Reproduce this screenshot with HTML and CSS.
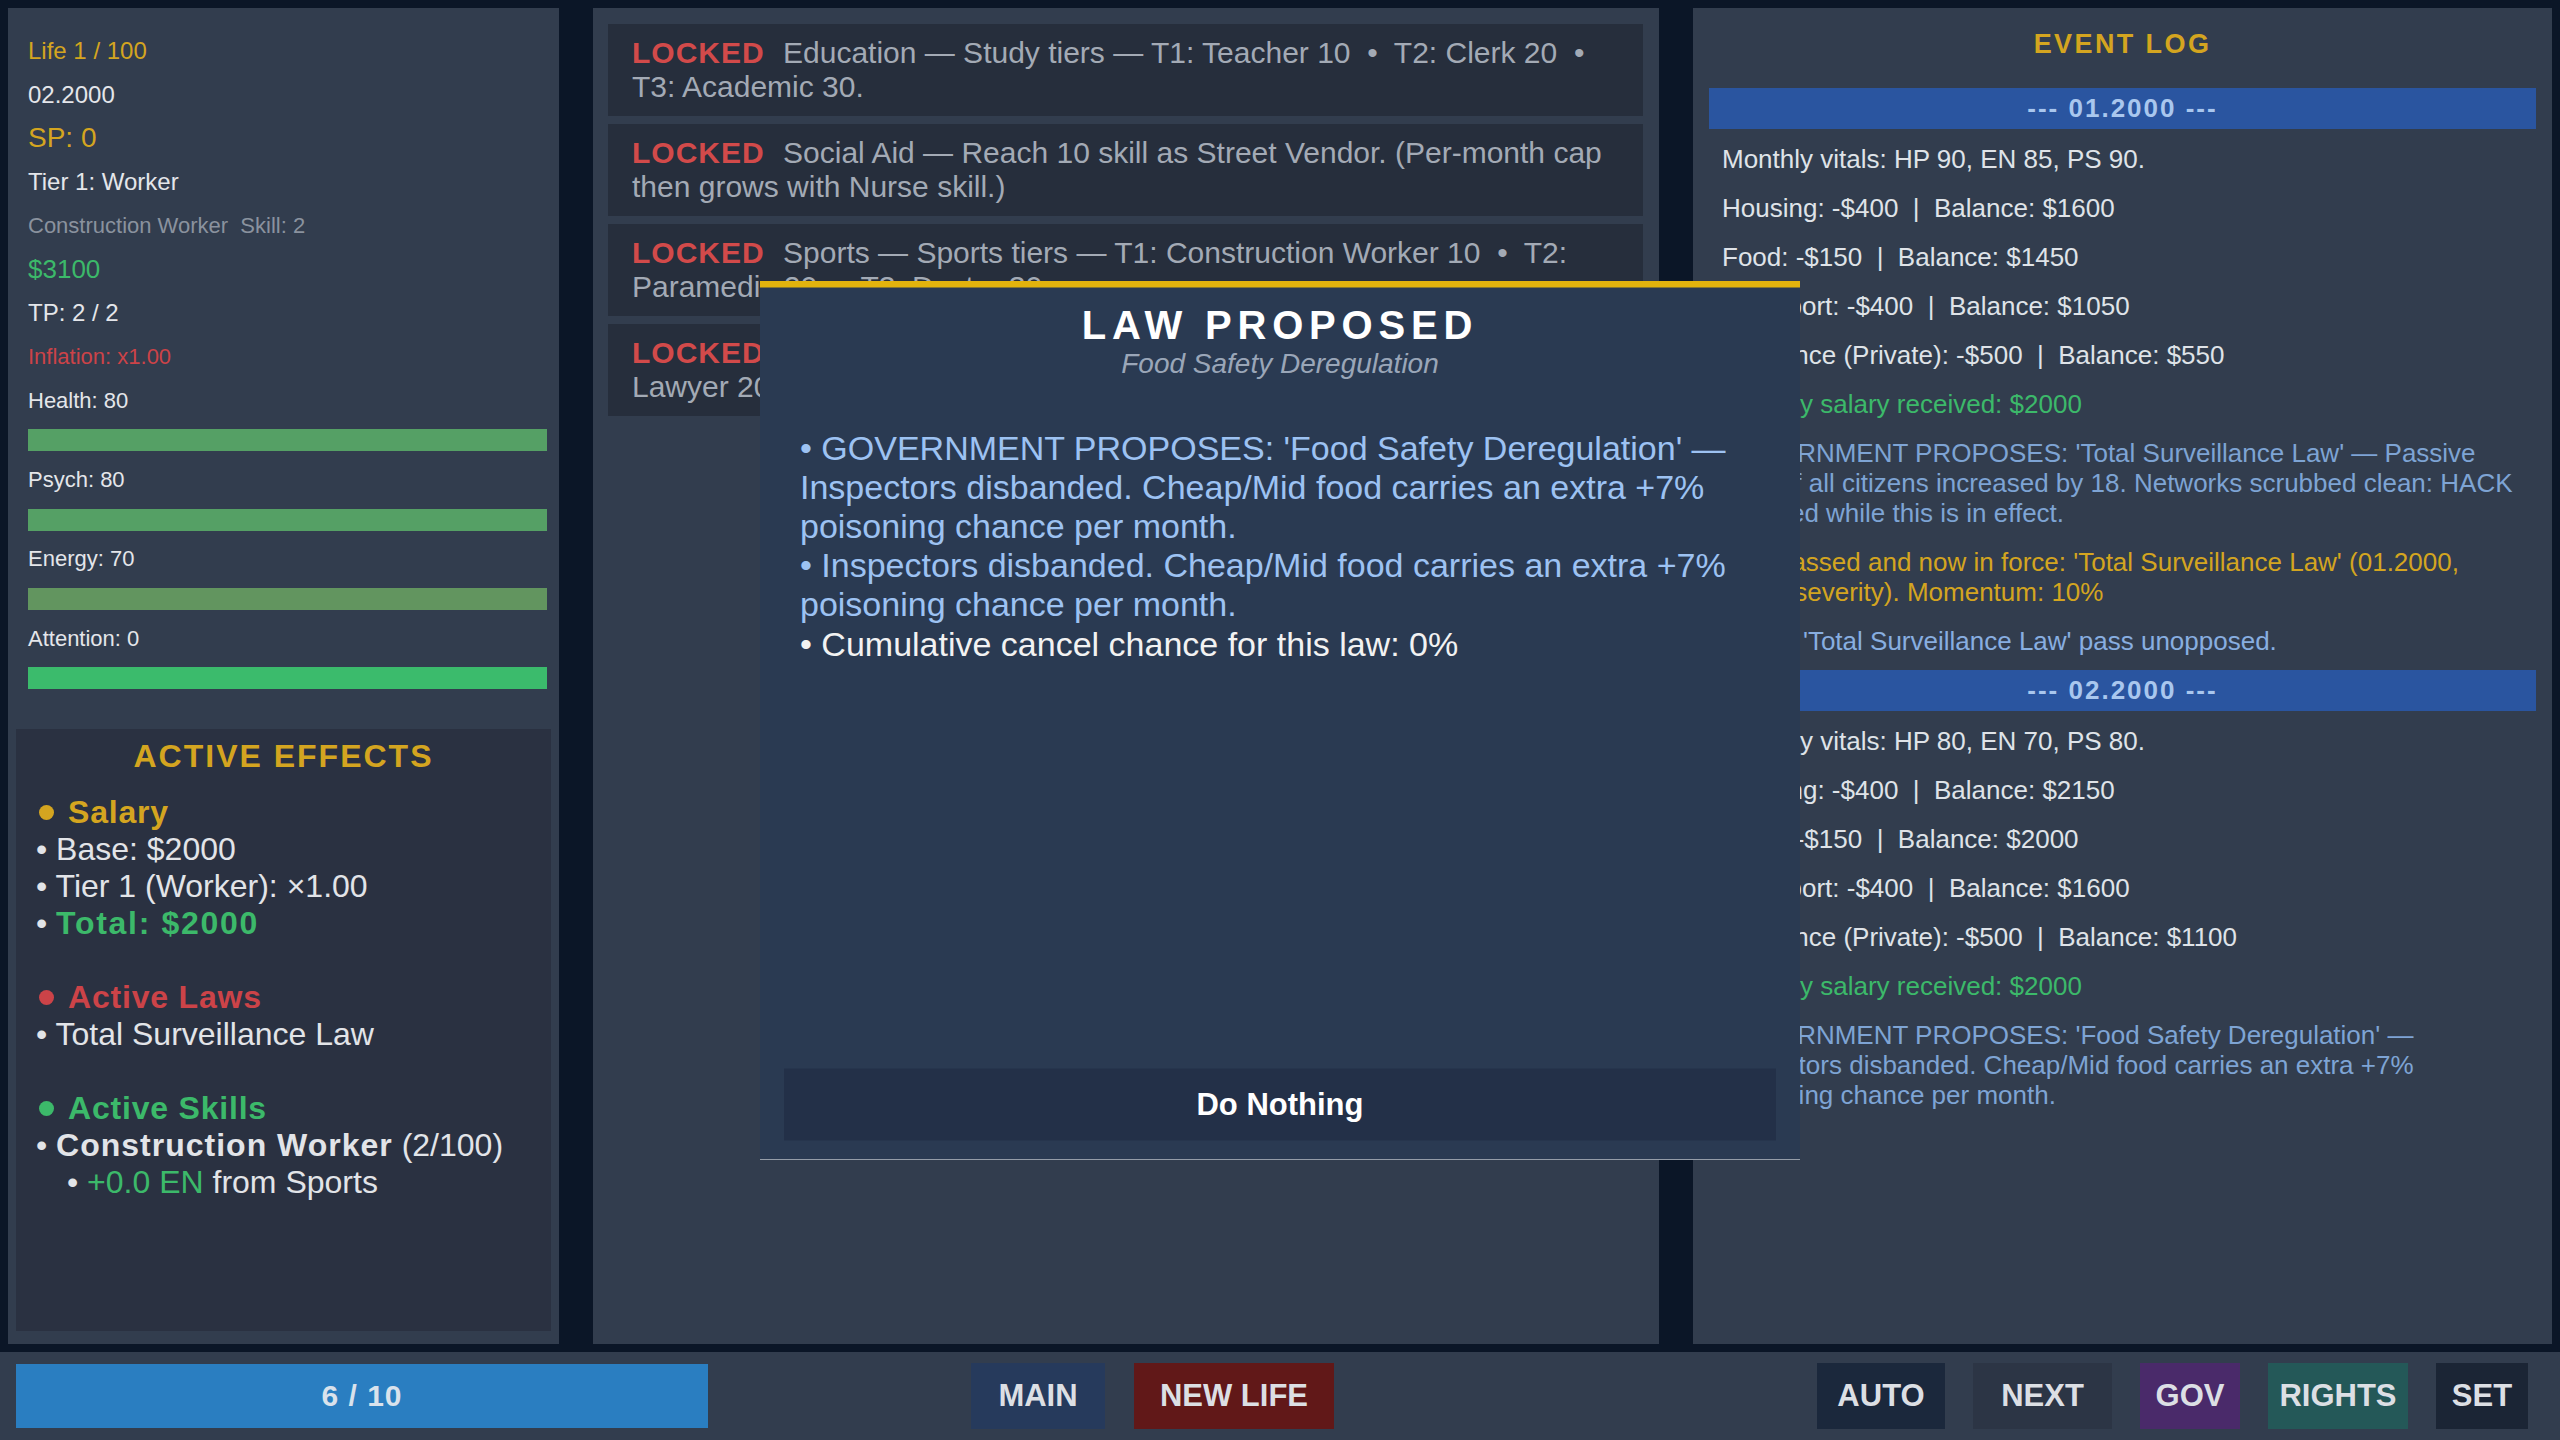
FILE: index.html
```html
<!DOCTYPE html>
<html lang="en">
<head>
    <meta charset="UTF-8">
    <meta name="viewport" content="width=device-width, initial-scale=1.0">
    <title>Life Sim</title>
    <link rel="stylesheet" href="styles.css">
</head>
<body>
    <div class="game">
        <!-- left: character stats -->
        <div class="panel stats-panel">
            <div class="stats">
                <div class="stat gold">Life 1 / 100</div>
                <div class="stat">02.2000</div>
                <div class="stat gold sp">SP: 0</div>
                <div class="stat">Tier 1: Worker</div>
                <div class="stat small muted">Construction Worker&nbsp; Skill: 2</div>
                <div class="stat green money">$3100</div>
                <div class="stat">TP: 2 / 2</div>
                <div class="stat small red">Inflation: x1.00</div>
                <div class="stat small">Health: 80</div>
                <div class="bar bar-health"></div>
                <div class="stat small">Psych: 80</div>
                <div class="bar bar-psych"></div>
                <div class="stat small">Energy: 70</div>
                <div class="bar bar-energy"></div>
                <div class="stat small">Attention: 0</div>
                <div class="bar bar-attention"></div>
            </div>

            <div class="effects">
                <div class="effects-title">ACTIVE EFFECTS</div>
                <div class="effects-list">
                    <div class="fx-head gold"><span class="dot dot-gold"></span>Salary</div>
                    <div>• Base: $2000</div>
                    <div>• Tier 1 (Worker): ×1.00</div>
                    <div>• <b class="green fx-total">Total: $2000</b></div>
                    <div class="fx-blank"></div>
                    <div class="fx-head red"><span class="dot dot-red"></span>Active Laws</div>
                    <div>• Total Surveillance Law</div>
                    <div class="fx-blank"></div>
                    <div class="fx-head green"><span class="dot dot-green"></span>Active Skills</div>
                    <div>• <b>Construction Worker</b> (2/100)</div>
                    <div class="fx-sub">• <span class="green">+0.0 EN</span> from Sports</div>
                </div>
            </div>
        </div>

        <!-- center: career tracks -->
        <div class="panel jobs-panel">
            <div class="job"><span class="locked">LOCKED</span> <span>Education — Study tiers — T1: Teacher 10&nbsp; •&nbsp; T2: Clerk 20&nbsp; •&nbsp; T3: Academic 30.</span></div>
            <div class="job"><span class="locked">LOCKED</span> <span>Social Aid — Reach 10 skill as Street Vendor. (Per-month cap then grows with Nurse skill.)</span></div>
            <div class="job"><span class="locked">LOCKED</span> <span>Sports — Sports tiers — T1: Construction Worker 10&nbsp; •&nbsp; T2: Paramedic 20&nbsp; •&nbsp; T3: Doctor 30.</span></div>
            <div class="job"><span class="locked">LOCKED</span> <span>Justice — Legal tiers — T1: Police Investigator 10&nbsp; •&nbsp; T2: Lawyer 20&nbsp; •&nbsp; T3: Judge 30.</span></div>
        </div>

        <!-- right: event log -->
        <div class="panel log-panel">
            <div class="log-title">EVENT LOG</div>
            <div class="log">
                <div class="log-date">--- 01.2000 ---</div>
                <div class="log-entry">Monthly vitals: HP 90, EN 85, PS 90.</div>
                <div class="log-entry">Housing: -$400 &nbsp;|&nbsp; Balance: $1600</div>
                <div class="log-entry">Food: -$150 &nbsp;|&nbsp; Balance: $1450</div>
                <div class="log-entry">Transport: -$400 &nbsp;|&nbsp; Balance: $1050</div>
                <div class="log-entry">Insurance (Private): -$500 &nbsp;|&nbsp; Balance: $550</div>
                <div class="log-entry green">Monthly salary received: $2000</div>
                <div class="log-entry gov">GOVERNMENT PROPOSES: 'Total Surveillance Law' — Passive heat of all citizens increased by 18. Networks scrubbed clean: HACK disabled while this is in effect.</div>
                <div class="log-entry gold">Law passed and now in force: 'Total Surveillance Law' (01.2000, major severity). Momentum: 10%</div>
                <div class="log-entry info">Event: 'Total Surveillance Law' pass unopposed.</div>
                <div class="log-date">--- 02.2000 ---</div>
                <div class="log-entry">Monthly vitals: HP 80, EN 70, PS 80.</div>
                <div class="log-entry">Housing: -$400 &nbsp;|&nbsp; Balance: $2150</div>
                <div class="log-entry">Food: -$150 &nbsp;|&nbsp; Balance: $2000</div>
                <div class="log-entry">Transport: -$400 &nbsp;|&nbsp; Balance: $1600</div>
                <div class="log-entry">Insurance (Private): -$500 &nbsp;|&nbsp; Balance: $1100</div>
                <div class="log-entry green">Monthly salary received: $2000</div>
                <div class="log-entry gov">GOVERNMENT PROPOSES: 'Food Safety Deregulation' — Inspectors disbanded. Cheap/Mid food carries an extra +7% poisoning chance per month.</div>
            </div>
        </div>
    </div>

    <div class="bottom-bar">
        <div class="progress">6 / 10</div>
        <div class="nav nav-center">
            <div class="btn btn-main">MAIN</div>
            <div class="btn btn-newlife">NEW LIFE</div>
        </div>
        <div class="nav nav-right">
            <div class="btn btn-auto">AUTO</div>
            <div class="btn btn-next">NEXT</div>
            <div class="btn btn-gov">GOV</div>
            <div class="btn btn-rights">RIGHTS</div>
            <div class="btn btn-set">SET</div>
        </div>
    </div>

    <!-- law proposal popup -->
    <div class="modal">
        <div class="modal-title">LAW PROPOSED</div>
        <div class="modal-sub">Food Safety Deregulation</div>
        <div class="modal-body">
            <div>• GOVERNMENT PROPOSES: 'Food Safety Deregulation' — Inspectors disbanded. Cheap/Mid food carries an extra +7% poisoning chance per month.</div>
            <div>• Inspectors disbanded. Cheap/Mid food carries an extra +7% poisoning chance per month.</div>
            <div class="modal-note">• Cumulative cancel chance for this law: 0%</div>
        </div>
        <div class="modal-btn">Do Nothing</div>
    </div>
</body>
</html>
```

FILE: styles.css
```css
* {
    box-sizing: border-box;
}

body {
    margin: 0;
    width: 2560px;
    height: 1440px;
    overflow: hidden;
    background: #0b1627;
    font-family: "Liberation Sans", Arial, sans-serif;
    color: #e4e6ea;
    display: flex;
    flex-direction: column;
}

.gold { color: #d4a520; }
.green { color: #3cb96a; }
.red { color: #cc4348; }
.muted { color: #8a929e; }

.game {
    display: grid;
    grid-template-columns: 551px 1066px 1fr;
    gap: 34px;
    padding: 8px 8px 0 8px;
    height: 1344px;
}

.panel {
    background: #323d4e;
}

/* left panel */
.stats-panel {
    display: flex;
    flex-direction: column;
    padding: 0 8px 13px;
}

.stats {
    display: flex;
    flex-direction: column;
    gap: 13.7px;
    padding: 28px 4px 0 12px;
}

.stat {
    font-size: 24px;
    line-height: 30px;
    white-space: nowrap;
}

.stat.small { font-size: 22px; }
.stat.sp { font-size: 28px; }
.stat.money { font-size: 26px; }

.bar {
    height: 22px;
}

.bar-health { background: #55a065; }
.bar-psych { background: #55a065; }
.bar-energy { background: #62955f; }
.bar-attention { background: #3bbb6c; }

.effects {
    margin-top: 40px;
    flex: 1;
    background: #2a3141;
    padding-top: 9px;
}

.effects-title {
    text-align: center;
    font-size: 32px;
    font-weight: bold;
    letter-spacing: 2px;
    line-height: 37px;
    color: #d4a520;
}

.effects-list {
    margin-top: 19px;
    padding-left: 20px;
    font-size: 32px;
    line-height: 37px;
    color: #e2e4e8;
}

.effects-list b {
    letter-spacing: 1px;
}

.effects-list .fx-total {
    letter-spacing: 1.7px;
}

.fx-head {
    display: flex;
    align-items: center;
    font-weight: bold;
    letter-spacing: 0.8px;
}

.dot {
    width: 15px;
    height: 15px;
    border-radius: 50%;
    margin: 0 14px 0 3px;
}

.dot-gold { background: #d4a520; }
.dot-red { background: #cc4348; }
.dot-green { background: #3cb96a; }

.fx-blank { height: 37px; }
.fx-sub { padding-left: 31px; }

/* center panel */
.jobs-panel {
    display: flex;
    flex-direction: column;
    gap: 8px;
    padding: 16px 16px 16px 15px;
}

.job {
    background: #262e3c;
    padding: 11.5px 24px;
    font-size: 30px;
    line-height: 34.5px;
    color: #a3aab5;
}

.locked {
    color: #d24a4a;
    font-weight: bold;
    letter-spacing: 1px;
    margin-right: 10px;
}

/* right panel */
.log-panel {
    padding: 21px 16px 16px;
}

.log-title {
    text-align: center;
    font-size: 27px;
    font-weight: bold;
    letter-spacing: 2.4px;
    line-height: 30px;
    color: #d4a520;
    margin-bottom: 29px;
}

.log {
    display: flex;
    flex-direction: column;
    gap: 10px;
}

.log-date {
    background: #2a55a0;
    color: #a9c7ee;
    text-align: center;
    font-size: 26px;
    font-weight: bold;
    letter-spacing: 2px;
    line-height: 41px;
}

.log-entry {
    padding: 4.5px 13px;
    font-size: 26px;
    line-height: 30px;
    color: #dfe3e8;
}

.log-entry.green { color: #3cb96a; }
.log-entry.gold { color: #d4a520; }
.log-entry.gov { color: #7ea4d4; }
.log-entry.info { color: #88aee0; }

/* bottom bar */
.bottom-bar {
    height: 88px;
    margin-top: 8px;
    background: #323d4e;
    display: flex;
    align-items: center;
    padding: 0 32px 0 16px;
}

.progress {
    width: 692px;
    height: 64px;
    background: #2a7ec1;
    display: flex;
    align-items: center;
    justify-content: center;
    font-size: 30px;
    font-weight: bold;
    letter-spacing: 1px;
    color: #d9e2ec;
}

.nav {
    display: flex;
    gap: 28px;
}

.nav-center {
    margin-left: 263px;
    gap: 29px;
}

.nav-right {
    margin-left: auto;
}

.btn {
    height: 66px;
    display: flex;
    align-items: center;
    justify-content: center;
    font-size: 31px;
    font-weight: bold;
    color: #dcdfe4;
}

.btn-main { width: 134px; background: #263a5c; }
.btn-newlife { width: 200px; background: #611818; }
.btn-auto { width: 128px; background: #1b283c; }
.btn-next { width: 139px; background: #2c3545; }
.btn-gov { width: 100px; background: #4a2a6a; }
.btn-rights { width: 140px; background: #245858; }
.btn-set { width: 92px; background: #1b2535; }

/* popup */
.modal {
    position: fixed;
    left: 50%;
    top: 50%;
    transform: translate(-50%, -50%);
    width: 1040px;
    height: 879px;
    background: #2a3a52;
    border-top: 7px solid #e2b30d;
    padding: 14px 24px 19px;
    display: flex;
    flex-direction: column;
}

.modal-title {
    text-align: center;
    font-size: 40px;
    font-weight: bold;
    letter-spacing: 5.8px;
    line-height: 46px;
    color: #ffffff;
}

.modal-sub {
    text-align: center;
    font-style: italic;
    font-size: 28px;
    line-height: 32px;
    color: #9aa6b8;
}

.modal-body {
    flex: 1;
    margin-top: 48.5px;
    padding: 0 16px;
    font-size: 34px;
    line-height: 39.2px;
    color: #9dc2f2;
}

.modal-note {
    color: #f2f2f2;
}

.modal-btn {
    height: 72px;
    background: #233048;
    display: flex;
    align-items: center;
    justify-content: center;
    font-size: 31px;
    font-weight: bold;
    color: #ffffff;
}
```
